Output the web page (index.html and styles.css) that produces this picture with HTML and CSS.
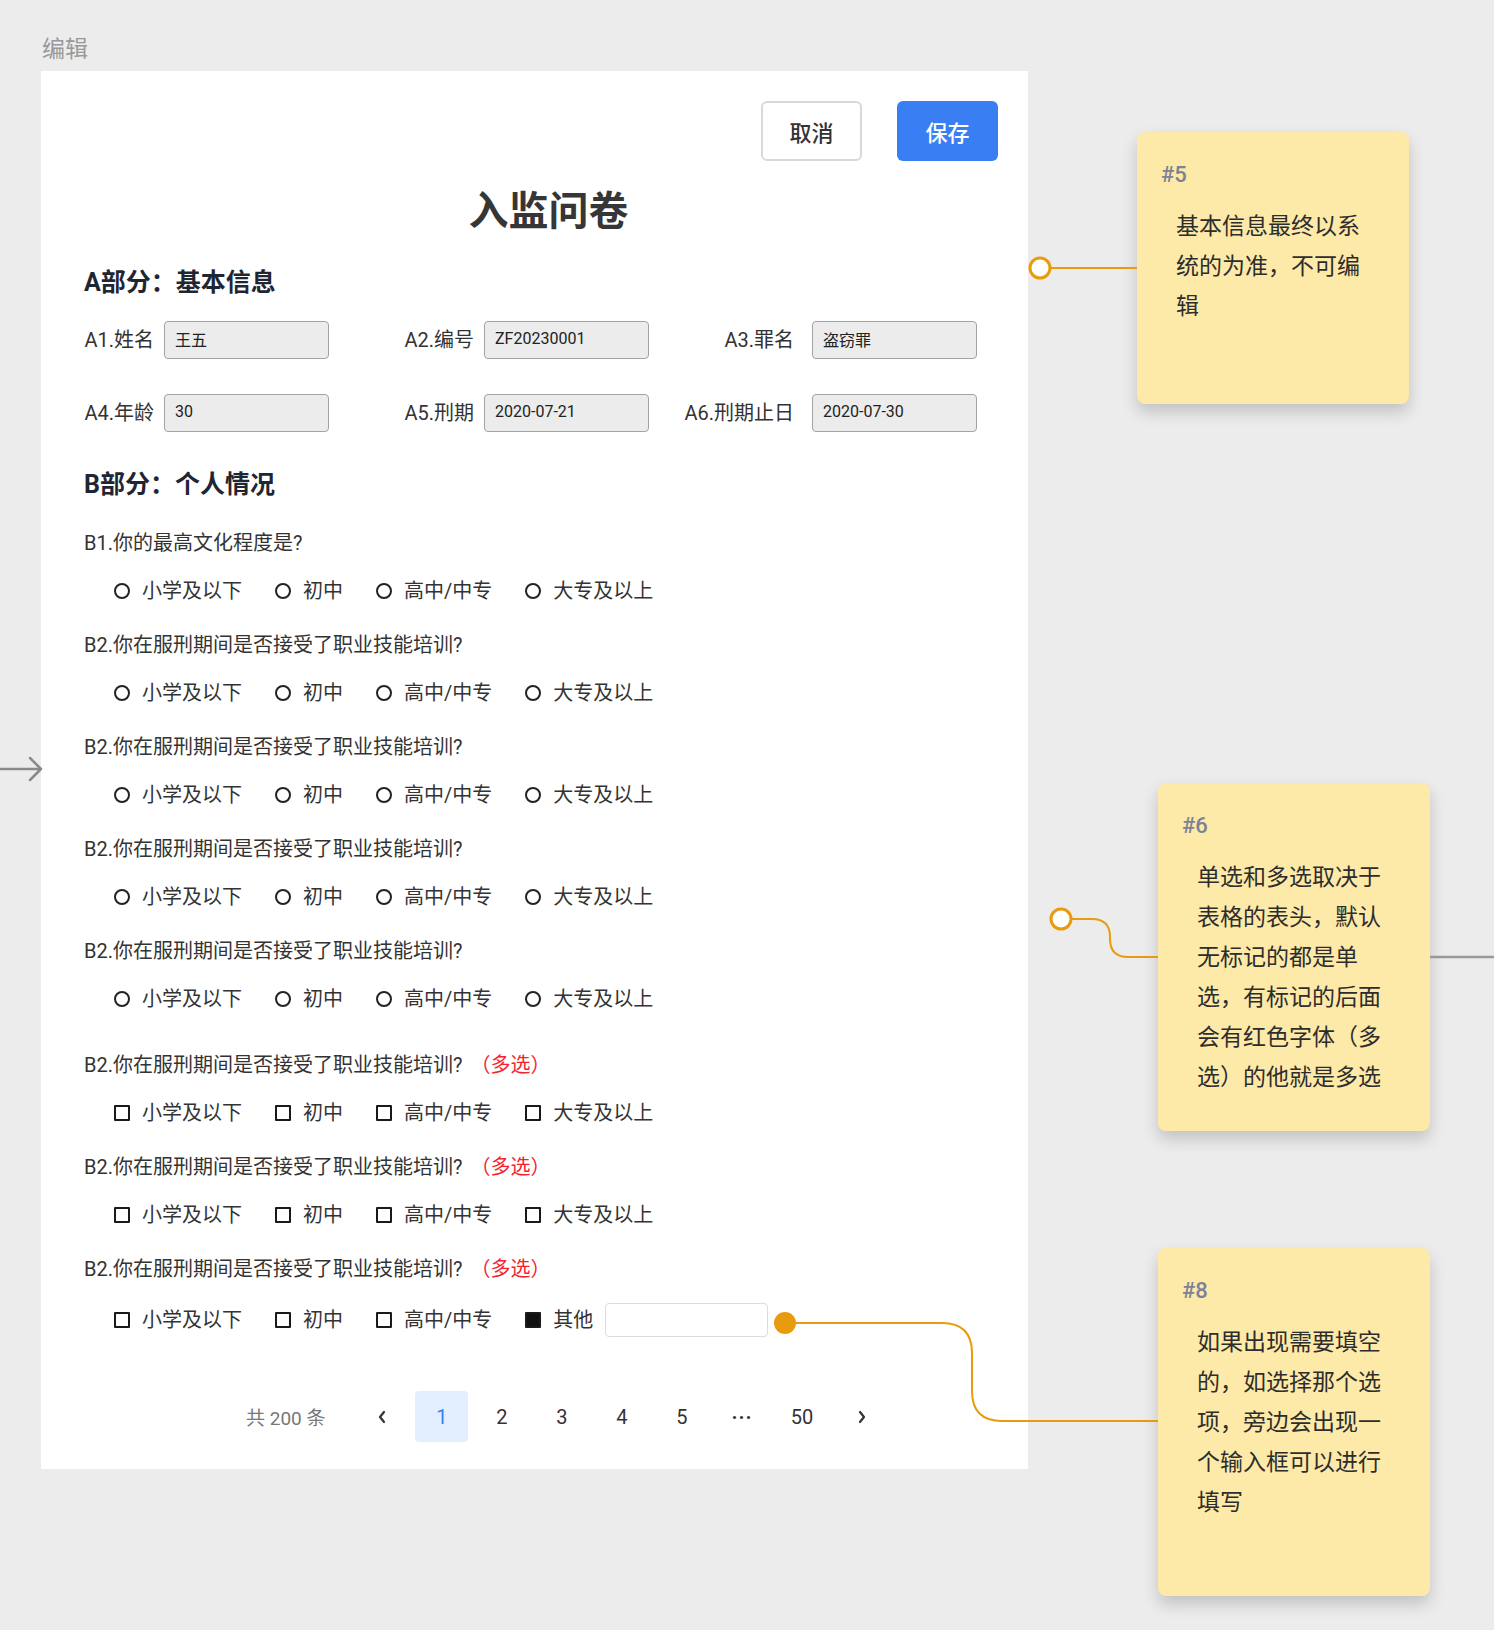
FILE: index.html
```html
<!DOCTYPE html>
<html lang="zh-CN">
<head>
    <meta charset="UTF-8">
    <meta name="viewport" content="width=device-width, initial-scale=1.0">
    <title>入监问卷 - 编辑</title>
    <link rel="stylesheet" href="styles.css">
</head>
<body>
    <div class="canvas">
        <div class="frame-label">编辑</div>

        <div class="panel">
            <div class="toolbar">
                <button class="btn btn-default">取消</button>
                <button class="btn btn-primary">保存</button>
            </div>

            <h1 class="title">入监问卷</h1>

            <h2 class="section-title">A部分：基本信息</h2>
            <div class="info-grid">
                <div class="field"><label>A1.姓名</label><input class="field-input" value="王五" readonly></div>
                <div class="field"><label>A2.编号</label><input class="field-input" value="ZF20230001" readonly></div>
                <div class="field"><label>A3.罪名</label><input class="field-input" value="盗窃罪" readonly></div>
                <div class="field"><label>A4.年龄</label><input class="field-input" value="30" readonly></div>
                <div class="field"><label>A5.刑期</label><input class="field-input" value="2020-07-21" readonly></div>
                <div class="field"><label>A6.刑期止日</label><input class="field-input" value="2020-07-30" readonly></div>
            </div>

            <h2 class="section-title section-b">B部分：个人情况</h2>

            <div class="question">
                <div class="q-title">B1.你的最高文化程度是?</div>
                <div class="options">
                    <label class="option"><span class="radio"></span>小学及以下</label>
                    <label class="option"><span class="radio"></span>初中</label>
                    <label class="option"><span class="radio"></span>高中/中专</label>
                    <label class="option"><span class="radio"></span>大专及以上</label>
                </div>
            </div>

            <div class="question">
                <div class="q-title">B2.你在服刑期间是否接受了职业技能培训?</div>
                <div class="options">
                    <label class="option"><span class="radio"></span>小学及以下</label>
                    <label class="option"><span class="radio"></span>初中</label>
                    <label class="option"><span class="radio"></span>高中/中专</label>
                    <label class="option"><span class="radio"></span>大专及以上</label>
                </div>
            </div>

            <div class="question">
                <div class="q-title">B2.你在服刑期间是否接受了职业技能培训?</div>
                <div class="options">
                    <label class="option"><span class="radio"></span>小学及以下</label>
                    <label class="option"><span class="radio"></span>初中</label>
                    <label class="option"><span class="radio"></span>高中/中专</label>
                    <label class="option"><span class="radio"></span>大专及以上</label>
                </div>
            </div>

            <div class="question">
                <div class="q-title">B2.你在服刑期间是否接受了职业技能培训?</div>
                <div class="options">
                    <label class="option"><span class="radio"></span>小学及以下</label>
                    <label class="option"><span class="radio"></span>初中</label>
                    <label class="option"><span class="radio"></span>高中/中专</label>
                    <label class="option"><span class="radio"></span>大专及以上</label>
                </div>
            </div>

            <div class="question">
                <div class="q-title">B2.你在服刑期间是否接受了职业技能培训?</div>
                <div class="options">
                    <label class="option"><span class="radio"></span>小学及以下</label>
                    <label class="option"><span class="radio"></span>初中</label>
                    <label class="option"><span class="radio"></span>高中/中专</label>
                    <label class="option"><span class="radio"></span>大专及以上</label>
                </div>
            </div>

            <div class="question question-multi-first">
                <div class="q-title">B2.你在服刑期间是否接受了职业技能培训?<span class="multi-tag">（多选）</span></div>
                <div class="options">
                    <label class="option"><span class="checkbox"></span>小学及以下</label>
                    <label class="option"><span class="checkbox"></span>初中</label>
                    <label class="option"><span class="checkbox"></span>高中/中专</label>
                    <label class="option"><span class="checkbox"></span>大专及以上</label>
                </div>
            </div>

            <div class="question">
                <div class="q-title">B2.你在服刑期间是否接受了职业技能培训?<span class="multi-tag">（多选）</span></div>
                <div class="options">
                    <label class="option"><span class="checkbox"></span>小学及以下</label>
                    <label class="option"><span class="checkbox"></span>初中</label>
                    <label class="option"><span class="checkbox"></span>高中/中专</label>
                    <label class="option"><span class="checkbox"></span>大专及以上</label>
                </div>
            </div>

            <div class="question">
                <div class="q-title">B2.你在服刑期间是否接受了职业技能培训?<span class="multi-tag">（多选）</span></div>
                <div class="options">
                    <label class="option"><span class="checkbox"></span>小学及以下</label>
                    <label class="option"><span class="checkbox"></span>初中</label>
                    <label class="option"><span class="checkbox"></span>高中/中专</label>
                    <label class="option"><span class="checkbox checked"></span>其他<input class="other-input" type="text"></label>
                </div>
            </div>

            <div class="pagination">
                <span class="total">共 200 条</span>
                <span class="page-item">
                    <svg width="10" height="14" viewBox="0 0 10 14"><path d="M7 2 L3 7 L7 12" fill="none" stroke="#333" stroke-width="2.2" stroke-linecap="round" stroke-linejoin="round"/></svg>
                </span>
                <span class="page-item active">1</span>
                <span class="page-item">2</span>
                <span class="page-item">3</span>
                <span class="page-item">4</span>
                <span class="page-item">5</span>
                <span class="page-item ellipsis">···</span>
                <span class="page-item">50</span>
                <span class="page-item">
                    <svg width="10" height="14" viewBox="0 0 10 14"><path d="M3 2 L7 7 L3 12" fill="none" stroke="#333" stroke-width="2.2" stroke-linecap="round" stroke-linejoin="round"/></svg>
                </span>
            </div>
        </div>

        <!-- annotations -->
        <div class="note note-5">
            <div class="note-tag">#5</div>
            <div class="note-text">基本信息最终以系统的为准，不可编辑</div>
        </div>
        <div class="note note-6">
            <div class="note-tag">#6</div>
            <div class="note-text">单选和多选取决于表格的表头，默认无标记的都是单选，有标记的后面会有红色字体（多选）的他就是多选</div>
        </div>
        <div class="note note-8">
            <div class="note-tag">#8</div>
            <div class="note-text">如果出现需要填空的，如选择那个选项，旁边会出现一个输入框可以进行填写</div>
        </div>

        <svg class="links" width="1494" height="1630" viewBox="0 0 1494 1630">
            <path d="M0 769 H41 M30 758 L41 769 L30 780" fill="none" stroke="#8a8a8a" stroke-width="2.5" stroke-linecap="round" stroke-linejoin="round"/>

            <line x1="1050" y1="268" x2="1137" y2="268" stroke="#e99b0e" stroke-width="2"/>
            <circle cx="1040" cy="268" r="10" fill="#fff" stroke="#e99b0e" stroke-width="3"/>

            <path d="M1071 919 H1092 Q1110 919 1110 937 V939 Q1110 957 1128 957 H1158" fill="none" stroke="#e99b0e" stroke-width="2"/>
            <circle cx="1061" cy="919" r="10" fill="#fff" stroke="#e99b0e" stroke-width="3"/>
            <line x1="1430" y1="957" x2="1494" y2="957" stroke="#999" stroke-width="2.5"/>

            <path d="M785 1323 H942 Q972 1323 972 1353 V1391 Q972 1421 1002 1421 H1158" fill="none" stroke="#e99b0e" stroke-width="2"/>
            <circle cx="785" cy="1323" r="11" fill="#e99b0e"/>
        </svg>
    </div>
</body>
</html>
```

FILE: styles.css
```css
* {
    margin: 0;
    padding: 0;
    box-sizing: border-box;
    font-family: Roboto, "Noto Sans CJK SC", sans-serif;
}

body {
    background-color: #ececec;
}

.canvas {
    position: relative;
    width: 1494px;
    height: 1630px;
    padding-top: 34px;
    overflow: hidden;
}

.frame-label {
    margin-left: 42px;
    font-size: 23px;
    line-height: 32px;
    color: #999;
}

.panel {
    width: 987px;
    margin: 5px 0 0 41px;
    padding: 30px 30px 27px 43px;
    background-color: #fff;
}

.toolbar {
    display: flex;
    justify-content: flex-end;
    gap: 35px;
}

.btn {
    width: 101px;
    height: 60px;
    border-radius: 6px;
    font-size: 22px;
    font-weight: 500;
    cursor: pointer;
}

.btn-default {
    background-color: #fff;
    border: 2px solid #d9d9d9;
    color: #333;
}

.btn-primary {
    background-color: #3a7ef4;
    border: none;
    color: #fff;
}

.title {
    margin-top: 23px;
    padding-left: 15px;
    text-align: center;
    font-size: 40px;
    line-height: 56px;
    font-weight: bold;
    color: #363636;
}

.section-title {
    margin-top: 26px;
    font-size: 25px;
    line-height: 34px;
    font-weight: bold;
    color: #1f2633;
}

.section-b {
    margin-top: 36px;
}

.info-grid {
    display: grid;
    grid-template-columns: 245px 245px 253px;
    column-gap: 75px;
    row-gap: 35px;
    margin-top: 21px;
}

.field {
    display: flex;
    justify-content: flex-end;
    align-items: center;
    gap: 10px;
}

.field:nth-child(3n) {
    gap: 18px;
}

.field label {
    font-size: 20px;
    line-height: 28px;
    color: #333;
    white-space: nowrap;
}

.field-input {
    width: 165px;
    height: 38px;
    padding: 0 10px 3px;
    background-color: #ececec;
    border: 1.5px solid #a3a3a3;
    border-radius: 4px;
    font-size: 16px;
    color: #222;
    outline: none;
}

.question {
    margin-top: 26px;
}

.section-b + .question {
    margin-top: 27px;
}

.question-multi-first {
    margin-top: 38px;
}

.q-title {
    font-size: 20px;
    line-height: 28px;
    color: #333;
}

.multi-tag {
    margin-left: 8px;
    color: #f5222d;
}

.options {
    display: flex;
    align-items: center;
    gap: 33px;
    margin-top: 20px;
    padding-left: 30px;
    min-height: 28px;
}

.option {
    display: flex;
    align-items: center;
    gap: 12px;
    font-size: 20px;
    line-height: 28px;
    color: #333;
}

.radio {
    width: 16px;
    height: 16px;
    border: 2px solid #222;
    border-radius: 50%;
}

.checkbox {
    width: 16px;
    height: 16px;
    border: 2px solid #1a1a1a;
    border-radius: 1px;
}

.checkbox.checked {
    background-color: #111;
}

.other-input {
    width: 163px;
    height: 34px;
    border: 1px solid #dcdcdc;
    border-radius: 4px;
    background-color: #fff;
    outline: none;
}

.pagination {
    display: flex;
    align-items: center;
    gap: 7px;
    margin: 54px 0 0 162px;
}

.total {
    margin-right: 23px;
    font-size: 19px;
    color: #777;
}

.page-item {
    display: flex;
    align-items: center;
    justify-content: center;
    width: 53px;
    height: 51px;
    border-radius: 4px;
    font-size: 20px;
    color: #333;
}

.page-item.active {
    background-color: #e3efff;
    color: #3a7ef4;
}

.page-item.ellipsis {
    font-weight: bold;
    letter-spacing: 1px;
}

.note {
    position: absolute;
    width: 272px;
    padding: 30px 24px;
    background-color: #fde9a8;
    border-radius: 8px;
    box-shadow: 0 8px 16px rgba(0,0,0,0.18);
}

.note-5 {
    left: 1137px;
    top: 132px;
    height: 272px;
}

.note-6 {
    left: 1158px;
    top: 783px;
    height: 348px;
}

.note-8 {
    left: 1158px;
    top: 1248px;
    height: 348px;
}

.note-tag {
    font-size: 22px;
    line-height: 26px;
    font-weight: 500;
    color: #7c8196;
}

.note-text {
    width: 207px;
    margin-top: 19px;
    padding-left: 15px;
    font-size: 23px;
    line-height: 40px;
    color: #2d2d2d;
}

.links {
    position: absolute;
    left: 0;
    top: 0;
    pointer-events: none;
}
```
